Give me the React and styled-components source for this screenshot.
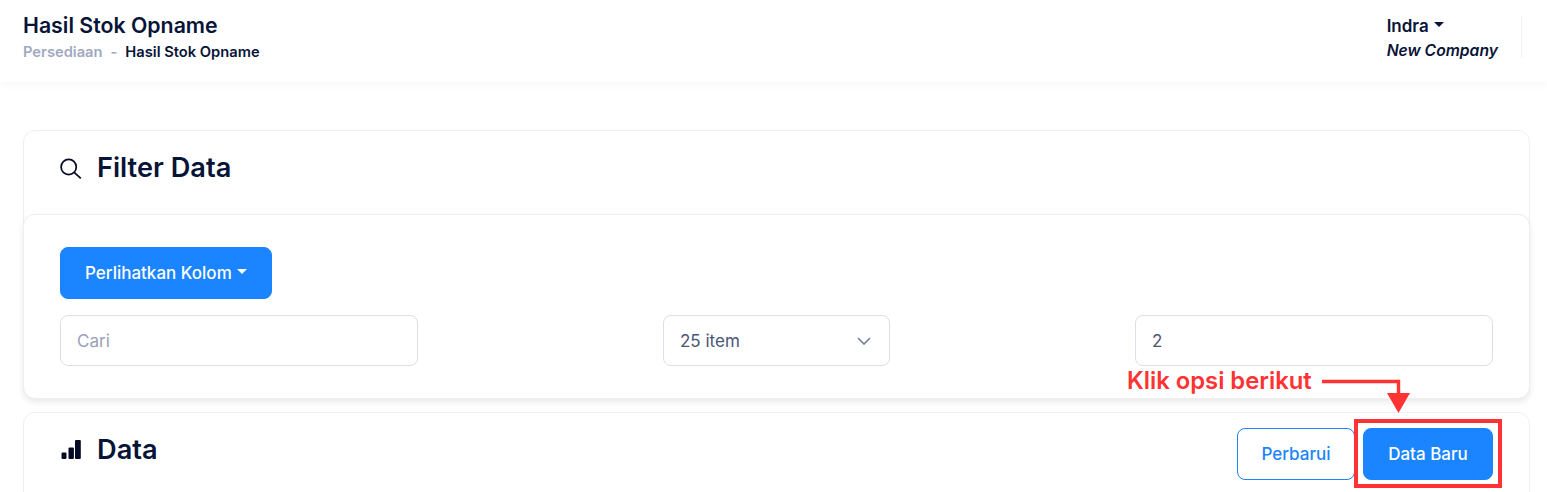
import React from "react"
import styled, { createGlobalStyle } from "styled-components"

const GlobalStyle = createGlobalStyle`
  html, body {
    margin: 0;
    padding: 0;
    height: 492px;
    overflow: hidden;
    background: #fff;
    font-family: Inter, "Liberation Sans", sans-serif;
    color: #071437;
  }
  * { box-sizing: border-box; }
`

const Page = styled.div`
  position: relative;
  width: 1547px;
  height: 492px;
  overflow: hidden;
`

const Header = styled.header`
  height: 82px;
  padding: 13px 25px 0 23px;
  display: flex;
  justify-content: space-between;
  align-items: flex-start;
  background: #fff;
  box-shadow: 0 2px 10px rgba(0, 0, 0, 0.04);
`

const PageTitle = styled.h1`
  margin: 0;
  font-size: 21.3px;
  line-height: 24px;
  font-weight: 600;
`

const Crumbs = styled.div`
  margin-top: 7px;
  display: flex;
  gap: 8px;
  font-size: 14.7px;
  line-height: 17px;
  font-weight: 600;
`

const Crumb = styled.span`
  color: ${p => (p.$muted ? "#a1a9c0" : "#071437")};
`

const UserBox = styled.div`
  height: 42px;
  margin-top: 3px;
  padding-right: 23px;
  border-right: 1px solid #f1f1f4;
`

const UserName = styled.div`
  display: flex;
  align-items: center;
  gap: 5px;
  height: 20px;
  font-size: 17px;
  font-weight: 600;
`

const Company = styled.div`
  margin-top: 5px;
  font-size: 15.7px;
  line-height: 19px;
  font-weight: 600;
  font-style: italic;
`

const Caret = styled.span`
  display: inline-block;
  margin-top: -4px;
  border-top: 5px solid ${p => p.$color || "#071437"};
  border-left: 5px solid transparent;
  border-right: 5px solid transparent;
`

const Content = styled.main`
  padding: 48px 17px 0 23px;
`

const Card = styled.section`
  background: #fff;
  border: 1px solid #eeeff2;
  border-radius: 12px;
`

const FilterPanel = styled(Card)`
  margin: 0 -1px -1px;
  box-shadow: 0 3px 6px rgba(0, 0, 0, 0.09);
`

const CardHead = styled.div`
  height: 83px;
  padding: 0 36px 10px;
  display: flex;
  align-items: center;
  gap: 15px;
`

const DataCard = styled(Card)`
  margin-top: 13px;
  height: 120px;
`

const DataHead = styled.div`
  height: 74px;
  padding: 0 36px;
  display: flex;
  align-items: center;
  gap: 15px;
`

const CardTitle = styled.h2`
  margin: 0;
  font-size: 27.2px;
  line-height: 32px;
  font-weight: 600;
  color: #071437;
`

const Icon = styled.svg`
  width: 22px;
  height: 22px;
  flex: none;
`

const FilterBody = styled.div`
  height: 183px;
  padding: 32px 36px 0;
  display: flex;
  flex-direction: column;
  gap: 16px;
`

const Button = styled.button`
  height: 52px;
  padding: 0 24px;
  border-radius: 8px;
  border: 1px solid #1b84ff;
  background: ${p => (p.$outline ? "#fff" : "#1b84ff")};
  color: ${p => (p.$outline ? "#1b84ff" : "#fff")};
  font-family: inherit;
  font-size: 17px;
  font-weight: 500;
  display: inline-flex;
  align-items: center;
  gap: 5px;
  white-space: nowrap;
`

const ColumnButton = styled(Button)`
  width: 212px;
  align-self: flex-start;
`

const FilterRow = styled.div`
  display: flex;
  justify-content: space-between;
`

const Field = styled.div`
  width: ${p => p.$width}px;
  height: 51px;
  padding: 0 18px 0 16px;
  display: flex;
  align-items: center;
  justify-content: space-between;
  border: 1px solid #dbdfe9;
  border-radius: 8px;
  background: #fff;
  font-size: 17px;
  color: ${p => (p.$placeholder ? "#99a1b7" : "#4b5675")};
`

const Actions = styled.div`
  margin-left: auto;
  margin-top: 8px;
  display: flex;
  gap: 8px;
`

const RefreshButton = styled(Button)`
  width: 118px;
  justify-content: center;
  padding: 0;
`

const NewButton = styled(Button)`
  width: 130px;
  justify-content: center;
  padding: 0;
`

const Highlight = styled.div`
  position: absolute;
  left: 1354px;
  top: 419px;
  width: 148px;
  height: 69px;
  border: 4px solid #ff3333;
  pointer-events: none;
`

const Note = styled.div`
  position: absolute;
  left: 1127px;
  top: 367px;
  font-size: 23.8px;
  line-height: 28px;
  font-weight: 600;
  color: #ff3333;
  white-space: nowrap;
`

const Arrow = styled.svg`
  position: absolute;
  left: 1320px;
  top: 376px;
  width: 92px;
  height: 40px;
`

const SearchIcon = () => (
  <Icon viewBox="0 0 22 22" fill="none" stroke="#050a24" strokeWidth="1.7">
    <circle cx="8.7" cy="10" r="7.6" />
    <path d="M14.2 15.4l6.6 6" />
  </Icon>
)

const BarsIcon = () => (
  <Icon viewBox="0 0 22 22" fill="#050a24">
    <rect x="1.5" y="13.5" width="5" height="6.5" rx="1.2" />
    <rect x="8.5" y="8.5" width="5.4" height="11.5" rx="1" />
    <rect x="15" y="1" width="5.8" height="19" rx="1" />
  </Icon>
)

const Chevron = () => (
  <svg width="14" height="8" viewBox="0 0 14 8" fill="none" stroke="#78829d" strokeWidth="1.7">
    <path d="M1 1l6 6 6-6" />
  </svg>
)

const App = () => (
  <Page>
    <GlobalStyle />
    <Header>
      <div>
        <PageTitle>Hasil Stok Opname</PageTitle>
        <Crumbs>
          <Crumb $muted>Persediaan</Crumb>
          <Crumb $muted>-</Crumb>
          <Crumb>Hasil Stok Opname</Crumb>
        </Crumbs>
      </div>
      <UserBox>
        <UserName>
          Indra <Caret />
        </UserName>
        <Company>New Company</Company>
      </UserBox>
    </Header>
    <Content>
      <Card>
        <CardHead>
          <SearchIcon />
          <CardTitle>Filter Data</CardTitle>
        </CardHead>
        <FilterPanel>
          <FilterBody>
            <ColumnButton>
              Perlihatkan Kolom <Caret $color="#fff" />
            </ColumnButton>
            <FilterRow>
              <Field $width={358} $placeholder>Cari</Field>
              <Field $width={227}>
                25 item <Chevron />
              </Field>
              <Field $width={358}>2</Field>
            </FilterRow>
          </FilterBody>
        </FilterPanel>
      </Card>
      <DataCard>
        <DataHead>
          <BarsIcon />
          <CardTitle>Data</CardTitle>
          <Actions>
            <RefreshButton $outline>Perbarui</RefreshButton>
            <NewButton>Data Baru</NewButton>
          </Actions>
        </DataHead>
      </DataCard>
    </Content>
    <Note>Klik opsi berikut</Note>
    <Arrow viewBox="0 0 92 40">
      <path d="M2 5.5h76.5V20" fill="none" stroke="#ff3333" strokeWidth="3.4" />
      <path d="M67 17h23L78.5 37z" fill="#ff3333" />
    </Arrow>
    <Highlight />
  </Page>
)

export default App
